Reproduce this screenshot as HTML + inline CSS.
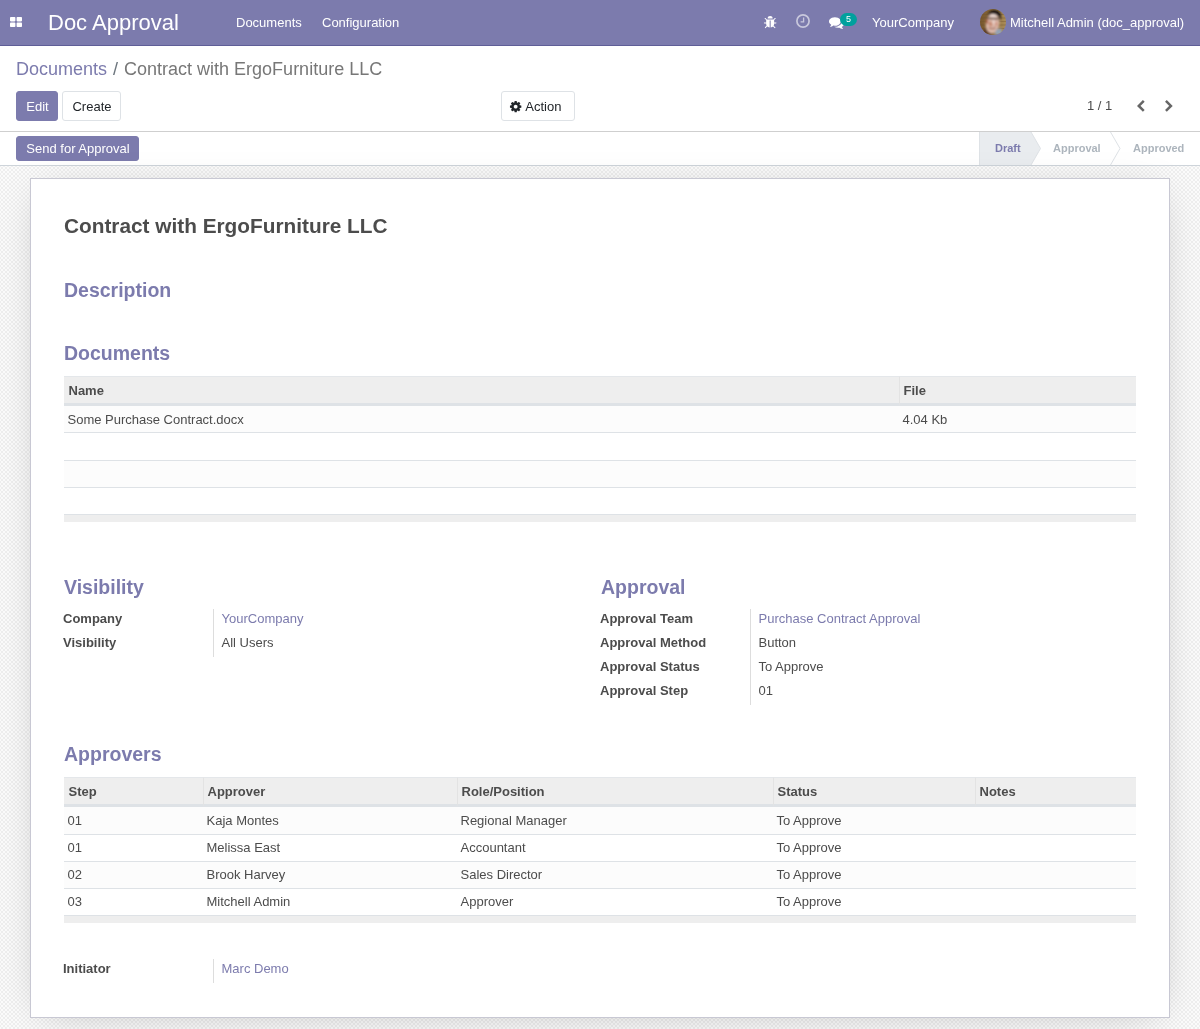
<!DOCTYPE html>
<html lang="en">
<head>
<meta charset="utf-8">
<title>Contract with ErgoFurniture LLC - Odoo</title>
<style>
*{box-sizing:border-box}
html,body{margin:0;padding:0}
body{width:1200px;height:1029px;overflow:hidden;font-family:"Liberation Sans",Arial,sans-serif;font-size:13px;line-height:1.5;color:#4c4c4c;background:#fff;position:relative}
a{color:#7c7bad;text-decoration:none}
svg{position:absolute;display:block;overflow:visible}
/* navbar */
.nav{position:absolute;left:0;top:0;width:1200px;height:46px;background:#7c7bad;border-bottom:1px solid #5f5e97;color:#fff}
.nav .t{position:absolute;top:0;height:45px;line-height:45px;white-space:nowrap;color:#fff}
.brand{left:48px;font-size:22px}
.mi{font-size:13px}
.badge{position:absolute;left:840px;top:13px;width:17px;height:13px;border-radius:7px;background:#00a09d;color:#fff;font-size:9px;line-height:13px;text-align:center}
/* control panel */
.cp{position:absolute;left:0;top:46px;width:1200px;height:86px;background:#fff;border-bottom:1px solid #cfcfcf}
.bc{position:absolute;left:16px;top:10px;font-size:18px;line-height:27px;color:#777;white-space:nowrap}
.bc a{color:#7c7bad}
.bc .sl{color:#6c757d;padding:0 6px 0 6px}
.btn{position:absolute;display:block;height:30px;line-height:30px;padding-top:0;border:1px solid transparent;border-radius:3px;font-size:13px;text-align:center;white-space:nowrap}
.btn-p{background:#7c7bad;border-color:#7c7bad;color:#fff}
.btn-s{background:#fff;border-color:#dee2e6;color:#212529}
/* statusbar */
.sb{position:absolute;left:0;top:132px;width:1200px;height:34px;background:#fff;border-bottom:1px solid #ced4da}
.st{position:absolute;top:0;height:33px;line-height:33px;font-size:11px;font-weight:bold;color:#adb5bd;white-space:nowrap}
/* content */
.bg{position:absolute;left:0;top:166px;width:1200px;height:863px;background-color:#fbfbfb;
background-image:repeating-conic-gradient(#eee 0% 25%,#fbfbfb 0% 50%);background-size:4px 4px;background-position:-1px 1px}
.sheet{position:absolute;left:30px;top:12px;width:1140px;height:840px;background:#fff;border:1px solid #c8c8d3;box-shadow:0 5px 40px -15px rgba(0,0,0,.27)}
h1,h2{margin:0;font-weight:bold;position:absolute;white-space:nowrap}
h1{font-size:20.8px;color:#4c4c4c;line-height:26px}
h2{font-size:19.5px;color:#7c7bad;line-height:24px}
.lbl{position:absolute;font-weight:bold;color:#4c4c4c;white-space:nowrap;line-height:20px}
.val{position:absolute;white-space:nowrap;line-height:20px}
.vl{position:absolute;width:1px;background:#ddd}
table{position:absolute;border-collapse:separate;border-spacing:0;table-layout:fixed;font-size:13px;line-height:20px}
th{background:#eee;text-align:left;vertical-align:top;font-weight:bold;color:#4c4c4c;padding:4px 0 0 3.5px;height:30px;border-left:1px solid #e3e3e3;border-bottom:3px solid #dee2e6;border-top:1px solid #e4e7ea}
th:first-child{border-left:none;padding-left:4.5px}
td{vertical-align:top;padding:var(--p,3px) 0 0 3.5px;height:var(--h,27px);border-bottom:1px solid #dee2e6}
tbody tr:nth-child(odd) td{background:#fcfcfc}
tfoot td{background:#eee;height:7px;border:none;padding:0}
</style>
</head>
<body><div style="will-change:transform;position:absolute;left:0;top:0;width:1200px;height:1029px">
<div class="nav">
  <svg style="left:10px;top:17px" width="12" height="10" viewBox="0 0 12 10"><rect x="0" y="0" width="5.4" height="4.4" rx=".8" fill="#fff"/><rect x="6.6" y="0" width="5.4" height="4.4" rx=".8" fill="#fff"/><rect x="0" y="5.6" width="5.4" height="4.4" rx=".8" fill="#fff"/><rect x="6.6" y="5.6" width="5.4" height="4.4" rx=".8" fill="#fff"/></svg>
  <span class="t brand">Doc Approval</span>
  <span class="t mi" style="left:236px">Documents</span>
  <span class="t mi" style="left:322px">Configuration</span>
  <!-- bug -->
  <svg style="left:763px;top:15px" width="14" height="14" viewBox="-20 -50 1792 1792"><path fill="#fff" d="M1696 960q0 26-19 45t-45 19h-224q0 171-67 290l208 209q19 19 19 45t-19 45q-18 19-45 19t-45-19l-198-197q-5 5-15 13t-42 28.500-65 36.500-82 29-97 13v-896h-128v896q-51 0-101.500-13.500t-87-33-66-39-43.500-32.500l-15-14-183 207q-20 21-48 21-24 0-43-16-19-18-20.500-44.500t15.500-46.500l202-227q-58-114-58-274h-224q-26 0-45-19t-19-45 19-45 45-19h224v-294l-173-173q-19-19-19-45t19-45 45-19 45 19l173 173h844l173-173q19-19 45-19t45 19 19 45-19 45l-173 173v294h224q26 0 45 19t19 45zm-480-576h-640q0-133 93.500-226.500t226.500-93.500 226.500 93.500 93.500 226.500z"/></svg>
  <!-- clock -->
  <svg style="left:796px;top:14.3px" width="14" height="14" viewBox="0 0 14 14" opacity=".58"><circle cx="7" cy="7" r="6.1" fill="none" stroke="#fff" stroke-width="1.7"/><path d="M7.6 3.6v4.2H4.6" fill="none" stroke="#fff" stroke-width="1.3"/></svg>
  <!-- comments -->
  <svg style="left:829px;top:14.5px" width="15" height="15" viewBox="0 0 1792 1792"><path fill="#fff" d="M1408 768q0 139-94 257t-256.500 186.500-353.500 68.500q-86 0-176-16-124 88-278 128-36 9-86 16h-3q-11 0-20.500-8t-11.500-21q-1-3-1-6.500t.5-6.500 2-6l2.500-5 3.500-5.500 4-5 4.500-5 4-4.500q5-6 23-25t26-29.500 22.500-29 25-38.500 20.500-44q-124-72-195-177t-71-224q0-139 94-257t256.500-186.500 353.500-68.500 353.500 68.500 256.500 186.500 94 257zm384 256q0 120-71 224.500t-195 176.500q10 24 20.500 44t25 38.500 22.500 29 26 29.500 23 25q1 1 4 4.500t4.500 5 4 5 3.500 5.500l2.500 5 2 6 .5 6.500-1 6.500q-3 14-13 22t-22 7q-50-7-86-16-154-40-278-128-90 16-176 16-271 0-472-132 58 4 88 4 161 0 309-45t264-129q125-92 192-212t67-254q0-77-23-152 129 71 204 178t75 230z"/></svg>
  <span class="badge">5</span>
  <span class="t mi" style="left:872px">YourCompany</span>
  <!-- avatar -->
  <svg style="left:980px;top:9px" width="26" height="26" viewBox="0 0 26 26">
    <defs><clipPath id="av"><circle cx="13" cy="13" r="13"/></clipPath>
    <linearGradient id="avb" x1="0" x2="1" y1="0" y2="0"><stop offset="0" stop-color="#76562c"/><stop offset=".45" stop-color="#8a6a3a"/><stop offset="1" stop-color="#ab8d58"/></linearGradient>
    <filter id="avf" x="-10%" y="-10%" width="120%" height="120%"><feGaussianBlur stdDeviation=".8"/></filter></defs>
    <g clip-path="url(#av)">
      <rect width="26" height="26" fill="url(#avb)"/>
      <path d="M0 5.500h26M0 9h26M0 12.500h26M0 16h26M0 19.500h26" stroke="#6e5230" stroke-width=".7" opacity=".55"/>
      <g filter="url(#avf)">
        <path d="M3 26l1-6 5-3 4 9z" fill="#5a3a22"/>
        <ellipse cx="12.500" cy="14.500" rx="6.800" ry="10" fill="#dcb9ab" transform="rotate(8 12.500 14.500)"/>
        <path d="M7.500 7.500C8 2.500 12 .8 15.500 1.200C19.500 1.800 21.500 5 20.600 8.500L19.800 12.500L18.600 7.800C16.500 5.600 13 4.800 10 5.800z" fill="#15100e"/>
        <ellipse cx="13.200" cy="6.800" rx="3.600" ry="1.800" fill="#ecd8d2"/>
        <path d="M6.400 9.200L18.400 9.800" stroke="#4a362e" stroke-width="1.400"/>
        <ellipse cx="10.800" cy="14.800" rx="2.200" ry="2.600" fill="#bf7358" opacity=".7"/>
        <ellipse cx="16.200" cy="15" rx="1.600" ry="2.200" fill="#c98670" opacity=".7"/>
        <ellipse cx="7" cy="12.500" rx="1.100" ry="2.600" fill="#a85a3e"/>
        <ellipse cx="13.600" cy="13.200" rx="1.400" ry="2.600" fill="#ead3cb"/>
        <path d="M9 18.800q3.200 2 6.600-.2" stroke="#8c4a3a" stroke-width="1.100" fill="none"/>
        <path d="M14.600 26l1.400-5.200 5.200-1.600 1.600 6.800z" fill="#93a3b6"/>
      </g>
    </g>
  </svg>
  <span class="t mi" style="left:1010px">Mitchell Admin (doc_approval)</span>
</div>
<div class="cp">
  <div class="bc"><a>Documents</a><span class="sl">/</span>Contract with ErgoFurniture LLC</div>
  <span class="btn btn-p" style="left:16px;top:45px;width:42px;padding-left:1px">Edit</span>
  <span class="btn btn-s" style="left:62px;top:45px;width:59px;padding-left:1px">Create</span>
  <span class="btn btn-s" style="left:501px;top:45px;width:74px;text-align:left;padding-left:23.3px">Action</span>
  <!-- cog -->
  <svg style="left:509px;top:53.9px" width="13.300" height="13.300" viewBox="0 0 1792 1792"><path fill="#212529" d="M1152 896q0-106-75-181t-181-75-181 75-75 181 75 181 181 75 181-75 75-181zm512-109v222q0 12-8 23t-20 13l-185 28q-19 54-39 91 35 50 107 138 10 12 10 25t-9 23q-27 37-99 108t-94 71q-12 0-26-9l-138-108q-44 23-91 38-16 136-29 186-7 28-36 28h-222q-14 0-24.500-8.500t-11.500-21.500l-28-184q-49-16-90-37l-141 107q-10 9-25 9-14 0-25-11-126-114-165-168-7-10-7-23 0-12 8-23 15-21 51-66.500t54-70.500q-27-50-41-99l-183-27q-13-2-21-12.500t-8-23.500v-222q0-12 8-23t19-13l186-28q14-46 39-92-40-57-107-138-10-12-10-24 0-10 9-23 26-36 98.500-107.500t94.500-71.500q13 0 26 10l138 107q44-23 91-38 16-136 29-186 7-28 36-28h222q14 0 24.500 8.500t11.500 21.500l28 184q49 16 90 37l142-107q9-9 24-9 13 0 25 10 129 119 165 170 7 8 7 22 0 12-8 23-15 21-51 66.500t-54 70.500q26 50 41 98l183 28q13 2 21 12.500t8 23.500z"/></svg>
  <span class="val" style="left:1087px;top:50px;color:#4c4c4c">1 / 1</span>
  <svg style="left:1137.3px;top:54.1px" width="9" height="12" viewBox="0 0 9 12"><path d="M6.790 .88L1.770 5.900L6.790 10.920" fill="none" stroke="#666" stroke-width="2.500"/></svg>
  <svg style="left:1165.2px;top:54.1px" width="9" height="12" viewBox="0 0 9 12"><path d="M.91 .88L5.930 5.900L.91 10.920" fill="none" stroke="#666" stroke-width="2.500"/></svg>
</div>
<div class="sb">
  <span class="btn btn-p" style="left:16px;top:4px;width:123px;height:25px;line-height:23px;padding-left:1px">Send for Approval</span>
  <svg style="left:979px;top:0" width="221" height="33" viewBox="0 0 221 33">
    <path d="M0 0H52L61.500 16.500L52 33H0z" fill="#e9ecef"/>
    <path d="M.5 0V33" stroke="#dee2e6" stroke-width="1" fill="none"/>
    <path d="M52 0L61.500 16.500L52 33" stroke="#dee2e6" stroke-width="1" fill="none"/>
    <path d="M131.500 0L141 16.500L131.500 33" stroke="#dee2e6" stroke-width="1" fill="none"/>
  </svg>
  <span class="st" style="left:995px;color:#7c7bad">Draft</span>
  <span class="st" style="left:1053px">Approval</span>
  <span class="st" style="left:1133px">Approved</span>
</div>
<div class="bg">
 <div class="sheet">
  <h1 style="left:33px;top:34px">Contract with ErgoFurniture LLC</h1>
  <h2 style="left:33px;top:99px">Description</h2>
  <h2 style="left:33px;top:162px">Documents</h2>
  <table style="left:33px;top:197px;width:1072px">
   <colgroup><col style="width:835px"><col style="width:237px"></colgroup>
   <thead><tr><th>Name</th><th>File</th></tr></thead>
   <tbody><tr style="--h:27px;--p:4px"><td>Some Purchase Contract.docx</td><td>4.04 Kb</td></tr><tr style="--h:28px"><td></td><td></td></tr><tr><td></td><td></td></tr><tr><td></td><td></td></tr></tbody>
   <tfoot><tr><td></td><td></td></tr></tfoot>
  </table>
  <h2 style="left:33px;top:396px">Visibility</h2>
  <span class="lbl" style="left:32px;top:430px">Company</span><a class="val" style="left:190.5px;top:430px">YourCompany</a>
  <span class="lbl" style="left:32px;top:454px">Visibility</span><span class="val" style="left:190.5px;top:454px">All Users</span>
  <div class="vl" style="left:182px;top:430px;height:48px"></div>
  <h2 style="left:570px;top:396px">Approval</h2>
  <span class="lbl" style="left:569px;top:430px">Approval Team</span><a class="val" style="left:727.5px;top:430px">Purchase Contract Approval</a>
  <span class="lbl" style="left:569px;top:454px">Approval Method</span><span class="val" style="left:727.5px;top:454px">Button</span>
  <span class="lbl" style="left:569px;top:478px">Approval Status</span><span class="val" style="left:727.5px;top:478px">To Approve</span>
  <span class="lbl" style="left:569px;top:502px">Approval Step</span><span class="val" style="left:727.5px;top:502px">01</span>
  <div class="vl" style="left:719px;top:430px;height:96px"></div>
  <h2 style="left:33px;top:563px">Approvers</h2>
  <table style="left:33px;top:598px;width:1072px">
   <colgroup><col style="width:139px"><col style="width:254px"><col style="width:316px"><col style="width:202px"><col style="width:161px"></colgroup>
   <thead><tr><th>Step</th><th>Approver</th><th>Role/Position</th><th>Status</th><th>Notes</th></tr></thead>
   <tbody>
    <tr style="--h:28px;--p:4px"><td>01</td><td>Kaja Montes</td><td>Regional Manager</td><td>To Approve</td><td></td></tr>
    <tr><td>01</td><td>Melissa East</td><td>Accountant</td><td>To Approve</td><td></td></tr>
    <tr><td>02</td><td>Brook Harvey</td><td>Sales Director</td><td>To Approve</td><td></td></tr>
    <tr><td>03</td><td>Mitchell Admin</td><td>Approver</td><td>To Approve</td><td></td></tr>
   </tbody>
   <tfoot><tr><td></td><td></td><td></td><td></td><td></td></tr></tfoot>
  </table>
  <span class="lbl" style="left:32px;top:780px">Initiator</span><a class="val" style="left:190.5px;top:780px">Marc Demo</a>
  <div class="vl" style="left:182px;top:780px;height:24px"></div>
 </div>
</div>
</div></body>
</html>
